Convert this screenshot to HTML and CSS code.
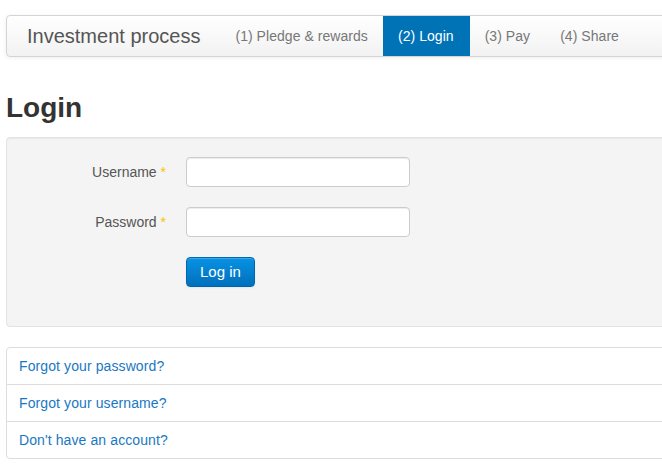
FILE: index.html
```html
<!DOCTYPE html>
<html lang="en">
<head>
    <meta charset="UTF-8">
    <meta name="viewport" content="width=device-width, initial-scale=1.0">
    <title>Investment process - Login</title>
    <link rel="stylesheet" href="styles.css">
</head>
<body>
    <div class="page">
        <div class="navbar">
            <span class="brand">Investment process</span>
            <ul class="steps">
                <li><a href="#">(1) Pledge &amp; rewards</a></li>
                <li class="active"><a href="#">(2) Login</a></li>
                <li><a href="#">(3) Pay</a></li>
                <li><a href="#">(4) Share</a></li>
            </ul>
        </div>

        <h1>Login</h1>

        <form class="well">
            <div class="control-group">
                <label for="username">Username <span class="star">*</span></label>
                <input type="text" id="username">
            </div>
            <div class="control-group">
                <label for="password">Password <span class="star">*</span></label>
                <input type="password" id="password">
            </div>
            <div class="control-group">
                <span></span>
                <div><button type="submit" class="btn-primary">Log in</button></div>
            </div>
        </form>

        <ul class="links">
            <li><a href="#">Forgot your password?</a></li>
            <li><a href="#">Forgot your username?</a></li>
            <li><a href="#">Don't have an account?</a></li>
        </ul>
    </div>
</body>
</html>
```

FILE: styles.css
```css
body {
    margin: 0;
    padding: 15px 0 0 6px;
    overflow: hidden;
    font-family: "Liberation Sans", Arial, sans-serif;
    font-size: 14px;
    line-height: 20px;
    color: #333;
    background: #fff;
}

.page {
    width: 720px;
}

.navbar {
    display: flex;
    align-items: center;
    height: 40px;
    border: 1px solid #d4d4d4;
    border-radius: 4px;
    background: linear-gradient(#ffffff, #f2f2f2);
    box-shadow: 0 1px 4px rgba(0, 0, 0, 0.065);
}

.brand {
    padding: 0 20px 0 20px;
    font-size: 20px;
    line-height: 40px;
    color: #555;
}

.steps {
    display: flex;
    margin: 0;
    padding: 0;
    list-style: none;
}

.steps a {
    display: block;
    padding: 10px 15px;
    color: #777;
    letter-spacing: 0.05px;
    text-decoration: none;
}

.steps .active a {
    background: #0073b7;
    color: #fff;
    padding: 10px 16px 10px 15px;
}

h1 {
    margin: 31px 0 9px;
    font-size: 28px;
    line-height: 40px;
    font-weight: bold;
    color: #333;
}

.well {
    margin: 0;
    padding: 19px 19px 19px;
    background: #f4f4f4;
    border: 1px solid #e3e3e3;
    border-radius: 4px;
    box-shadow: inset 0 1px 1px rgba(0, 0, 0, 0.05);
}

.control-group {
    display: grid;
    grid-template-columns: 140px 224px;
    gap: 20px;
    align-items: center;
    margin-bottom: 20px;
}

.control-group label {
    text-align: right;
    color: #555;
}

.star {
    color: #f5c400;
}

input {
    box-sizing: border-box;
    width: 224px;
    height: 30px;
    padding: 4px 6px;
    border: 1px solid #ccc;
    border-radius: 4px;
    background: #fff;
    font: inherit;
    box-shadow: inset 0 1px 1px rgba(0, 0, 0, 0.075);
}

.btn-primary {
    height: 30px;
    padding: 4px 13px;
    border: 1px solid #0066b0;
    border-radius: 4px;
    background: linear-gradient(#0892e4, #0070bc);
    color: #fff;
    font: inherit;
    font-size: 15px;
    cursor: pointer;
    box-shadow: inset 0 1px 0 rgba(255, 255, 255, 0.2), 0 1px 2px rgba(0, 0, 0, 0.05);
}

.links {
    margin: 20px 0 0;
    padding: 0;
    list-style: none;
    border: 1px solid #ddd;
    border-radius: 4px;
}

.links li {
    padding: 8px 12px;
    border-top: 1px solid #ddd;
    letter-spacing: 0.1px;
}

.links li:first-child {
    border-top: none;
}

.links a {
    color: #1a78c2;
    text-decoration: none;
}
```
